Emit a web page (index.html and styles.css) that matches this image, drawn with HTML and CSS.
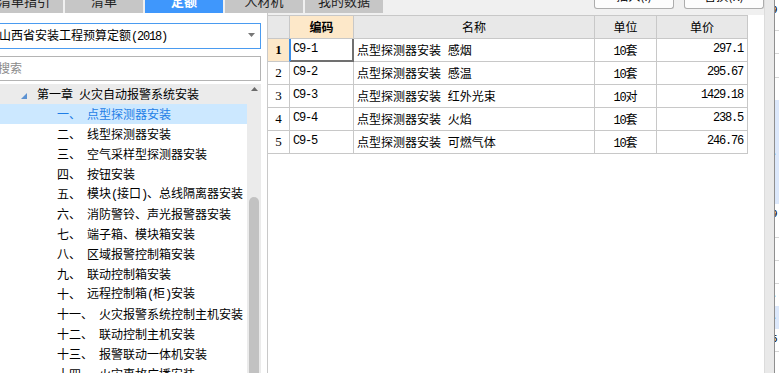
FILE: index.html
```html
<!DOCTYPE html>
<html lang="zh-CN">
<head>
    <meta charset="UTF-8">
    <meta name="viewport" content="width=device-width, initial-scale=1.0">
    <title>定额</title>
    <link rel="stylesheet" href="styles.css">
</head>
<body>
    <div class="app">
        <div class="topbar">
            <div class="tabs">
                <div class="tab"><span>清单指引</span></div>
                <div class="tab"><span>清单</span></div>
                <div class="tab active"><span>定额</span></div>
                <div class="tab"><span>人材机</span></div>
                <div class="tab"><span>我的数据</span></div>
            </div>
            <div class="actions">
                <div class="btn"><span>插入(I)</span></div>
                <div class="btn"><span>替换(R)</span></div>
            </div>
        </div>

        <div class="main">
            <!-- left: quota library tree -->
            <div class="left">
                <div class="select">
                    <span>山西省安装工程预算定额<span class="half">(2018)</span></span>
                    <svg width="7" height="4" viewBox="0 0 7 4"><polygon points="0,0 7,0 3.5,4" fill="#777"/></svg>
                </div>
                <input class="search" type="text" placeholder="搜索">
                <div class="tree">
                    <div class="tree-list">
                        <div class="row chapter">
                            <svg class="caret" width="6" height="6" viewBox="0 0 6 6"><polygon points="6,0 6,6 0,6" fill="#5d92d2"/></svg>
                            <span class="num">第一章</span><span>火灾自动报警系统安装</span>
                        </div>
                        <div class="row item active"><span class="num">一、</span><span>点型探测器安装</span></div>
                        <div class="row item"><span class="num">二、</span><span>线型探测器安装</span></div>
                        <div class="row item"><span class="num">三、</span><span>空气采样型探测器安装</span></div>
                        <div class="row item"><span class="num">四、</span><span>按钮安装</span></div>
                        <div class="row item"><span class="num">五、</span><span>模块<span class="half">(</span>接口<span class="half">)</span>、总线隔离器安装</span></div>
                        <div class="row item"><span class="num">六、</span><span>消防警铃、声光报警器安装</span></div>
                        <div class="row item"><span class="num">七、</span><span>端子箱、模块箱安装</span></div>
                        <div class="row item"><span class="num">八、</span><span>区域报警控制箱安装</span></div>
                        <div class="row item"><span class="num">九、</span><span>联动控制箱安装</span></div>
                        <div class="row item"><span class="num">十、</span><span>远程控制箱<span class="half">(</span>柜<span class="half">)</span>安装</span></div>
                        <div class="row item"><span class="num">十一、</span><span>火灾报警系统控制主机安装</span></div>
                        <div class="row item"><span class="num">十二、</span><span>联动控制主机安装</span></div>
                        <div class="row item"><span class="num">十三、</span><span>报警联动一体机安装</span></div>
                        <div class="row item"><span class="num">十四、</span><span>火灾事故广播安装</span></div>
                    </div>
                    <div class="scroll">
                        <svg class="up" width="7" height="4" viewBox="0 0 7 4"><polygon points="0,4 7,4 3.5,0" fill="#6b6b6b"/></svg>
                        <div class="thumb"></div>
                    </div>
                </div>
            </div>

            <!-- center: quota items -->
            <div class="center">
                <div class="sheet">
                    <div class="grid">
                        <div class="cell head"></div>
                        <div class="cell head current">编码</div>
                        <div class="cell head">名称</div>
                        <div class="cell head">单位</div>
                        <div class="cell head">单价</div>

                        <div class="cell no current">1</div>
                        <div class="cell code selected">C9-1</div>
                        <div class="cell name">点型探测器安装 感烟</div>
                        <div class="cell unit"><span class="digits">10</span>套</div>
                        <div class="cell price">297.1</div>

                        <div class="cell no">2</div>
                        <div class="cell code">C9-2</div>
                        <div class="cell name">点型探测器安装 感温</div>
                        <div class="cell unit"><span class="digits">10</span>套</div>
                        <div class="cell price">295.67</div>

                        <div class="cell no">3</div>
                        <div class="cell code">C9-3</div>
                        <div class="cell name">点型探测器安装 红外光束</div>
                        <div class="cell unit"><span class="digits">10</span>对</div>
                        <div class="cell price">1429.18</div>

                        <div class="cell no">4</div>
                        <div class="cell code">C9-4</div>
                        <div class="cell name">点型探测器安装 火焰</div>
                        <div class="cell unit"><span class="digits">10</span>套</div>
                        <div class="cell price">238.5</div>

                        <div class="cell no">5</div>
                        <div class="cell code">C9-5</div>
                        <div class="cell name">点型探测器安装 可燃气体</div>
                        <div class="cell unit"><span class="digits">10</span>套</div>
                        <div class="cell price">246.76</div>
                    </div>
                </div>
            </div>
        </div>
    </div>

    <!-- right: edge of the next panel -->
    <div class="side">
        <div class="band"></div>
        <div class="peek">
            <div class="p-row line h31">9</div>
            <div class="p-row line h23"></div>
            <div class="p-row line h24"></div>
            <div class="p-row h22"></div>
            <div class="p-row blue h104"><span class="dot">.</span></div>
            <div class="p-row line h34">9</div>
            <div class="p-row line h23"></div>
            <div class="p-row line h23"></div>
            <div class="p-row h22">.</div>
            <div class="p-row blue h23">.</div>
            <div class="p-row line h23">5</div>
            <div class="p-row"></div>
        </div>
    </div>
</body>
</html>
```

FILE: styles.css
```css
body {
    margin: 0;
    width: 779px;
    height: 373px;
    overflow: hidden;
    display: flex;
    background: #f0f0f0;
    font-family: "Noto Sans CJK SC", "Noto Sans", sans-serif;
    font-size: 12px;
    color: #000;
}
.app {
    width: 764px;
    display: flex;
    flex-direction: column;
}
.topbar {
    height: 13px;
    display: flex;
    justify-content: space-between;
    overflow: hidden;
}
.tabs {
    display: flex;
    gap: 2px;
    margin-left: -15px;
}
.tab {
    width: 78px;
    height: 13px;
    background: #c6c6c6;
    color: #222;
    text-align: center;
    font-size: 13px;
    line-height: 14px;
    overflow: hidden;
}
.tab span {
    display: block;
    margin-top: -6px;
}
.tab.active {
    background: #3f97fc;
    color: #fff;
    font-weight: bold;
}
.actions {
    display: flex;
    gap: 10px;
}
.btn {
    width: 80px;
    height: 9px;
    box-sizing: border-box;
    border: 1px solid #adadad;
    border-top: none;
    border-radius: 0 0 3px 3px;
    background: #fdfdfd;
    text-align: center;
    line-height: 14px;
    overflow: hidden;
}
.btn span {
    display: block;
    margin-top: -11px;
}
.main {
    flex: 1;
    display: flex;
    min-height: 0;
}
.left {
    width: 268px;
    box-sizing: border-box;
    background: #fff;
    border-right: 1px solid #c9c9c9;
    padding: 10px 6px 0 0;
    display: flex;
    flex-direction: column;
    overflow: hidden;
}
.half {
    font-family: "Liberation Mono", monospace;
    font-size: 12px;
    letter-spacing: -1.2px;
}
.select {
    height: 26px;
    margin-left: -6px;
    box-sizing: border-box;
    border: 1px solid #4a9bf0;
    background: #fff;
    display: flex;
    align-items: center;
    justify-content: space-between;
    padding: 0 5px 2px 4px;
    white-space: nowrap;
}
.select svg {
    margin-top: -1px;
}
.search {
    margin: 7px 0 0 -6px;
    width: calc(100% + 6px);
    height: 25px;
    box-sizing: border-box;
    border: 1px solid #b4b4b4;
    padding: 0 0 2px 3px;
    font-family: inherit;
    font-size: 12px;
    outline: none;
}
.search::placeholder {
    color: #8a8a8a;
}
.tree {
    flex: 1;
    display: flex;
    margin-top: 3px;
    min-height: 0;
}
.tree-list {
    flex: 1;
    overflow: hidden;
}
.row {
    height: 20px;
    line-height: 20px;
    display: flex;
    align-items: center;
    white-space: nowrap;
}
.row .num {
    margin-right: 6px;
}
.chapter {
    background: #ebebeb;
    padding-left: 21px;
}
.caret {
    margin: 3px 10px 0 0;
}
.item {
    padding-left: 57px;
}
.item.active {
    background: #cce8ff;
    color: #1f7ee6;
}
.scroll {
    width: 14px;
    background: #ebebeb;
    display: flex;
    flex-direction: column;
    align-items: center;
}
.up {
    margin-top: 3px;
}
.thumb {
    width: 10px;
    flex: 1;
    margin-top: 106px;
    background: #c2c2c2;
    border-radius: 5px 5px 0 0;
}
.center {
    width: 496px;
    padding-top: 2px;
    display: flex;
    flex-direction: column;
}
.sheet {
    flex: 1;
    background: #fff;
}
.grid {
    display: grid;
    grid-template-columns: 22px 64px 241px 62px 91px;
    grid-auto-rows: 23px;
    width: 480px;
    border-top: 1px solid #c8c8c8;
}
.cell {
    box-sizing: border-box;
    border-right: 1px solid #c8c8c8;
    border-bottom: 1px solid #c8c8c8;
    padding: 0 3px;
    line-height: 21px;
    white-space: nowrap;
    overflow: hidden;
}
.cell.head {
    background: #e8e8e8;
    text-align: center;
}
.cell.head.current {
    background: #fde8c9;
    font-weight: bold;
}
.cell.no {
    text-align: center;
    padding: 0;
    font-family: "Liberation Serif", serif;
    font-size: 13px;
}
.cell.no.current {
    background: #fde8c9;
    font-weight: bold;
    border-right-color: #3b8de6;
}
.name {
    word-spacing: 4px;
}
.code, .price, .digits {
    font-family: "Liberation Mono", monospace;
    font-size: 12px;
    letter-spacing: -1.2px;
}
.code.selected {
    border-right-color: #707070;
    border-bottom-color: #707070;
    box-shadow: inset 1px 0 0 #3b8de6, inset -1px -1px 0 #707070;
}
.unit {
    text-align: center;
}
.price {
    text-align: right;
    padding-right: 4px;
}
.side {
    width: 15px;
    display: flex;
}
.band {
    width: 10px;
    box-sizing: border-box;
    background: #e9e9e9;
    border-left: 1px solid #dcdcdc;
}
.peek {
    flex: 1;
    background: #fff;
    border-left: 1px solid #8f8f8f;
    display: flex;
    flex-direction: column;
    overflow: hidden;
}
.p-row {
    box-sizing: border-box;
    flex-shrink: 0;
    font-family: "Liberation Mono", monospace;
    font-size: 11px;
    line-height: 20px;
    text-indent: -4px;
    overflow: hidden;
}
.p-row:last-child {
    flex: 1;
}
.p-row.line {
    border-bottom: 1px solid #d5d5d5;
}
.p-row.blue {
    background: #dce8fb;
}
.p-row .dot {
    display: block;
    margin-top: 42px;
}
.h22 { height: 22px; }
.h23 { height: 23px; }
.h24 { height: 24px; }
.h31 { height: 31px; }
.h34 { height: 34px; }
.h104 { height: 104px; }
```
